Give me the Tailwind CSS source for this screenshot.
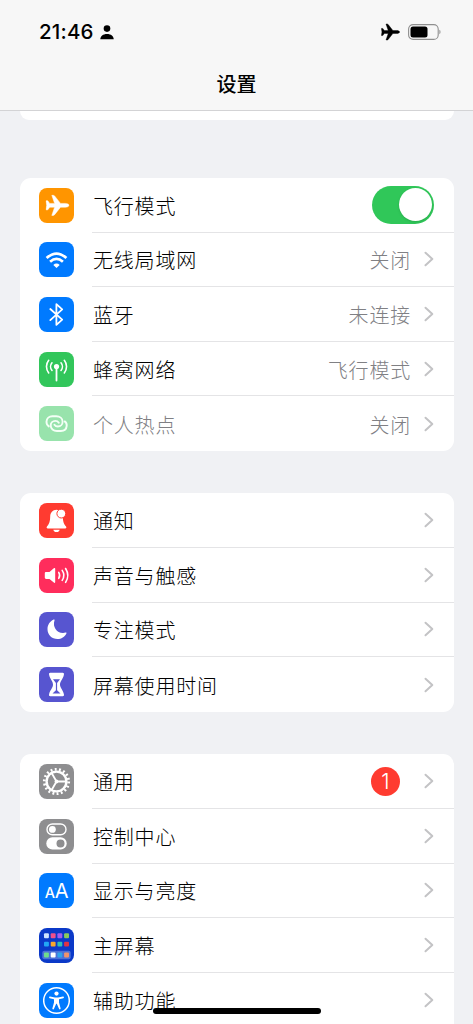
<!DOCTYPE html>
<html lang="zh-CN">
<head>
<meta charset="utf-8">
<meta name="viewport" content="width=device-width, initial-scale=1">
<title>设置</title>
<script src="https://cdn.jsdelivr.net/npm/@tailwindcss/browser@4"></script>
</head>
<body class="h-[1024px] overflow-hidden bg-[#f0f1f4] font-['Inter','Noto_Sans_CJK_SC',sans-serif] text-black">
<svg class="hidden">
  <symbol id="chev" viewBox="0 0 10 16"><path d="M1.500 1.700 8.300 8l-6.800 6.300" fill="none" stroke="#c3c3c5" stroke-width="2" stroke-linecap="round" stroke-linejoin="round"/></symbol>
  <symbol id="plane" viewBox="6.5 6.5 24 21.6"><path d="M30 17.3c0-1.200-1.800-1.900-3.500-1.900H21.500L15.600 7.900c-.4-.5-.8-.7-1.400-.7h-1.400l2.800 8.200H10.700L8.800 12.800H7L7.700 17.300 7 21.800H8.800L10.700 19.200H15.600L12.800 27.400h1.400c.6 0 1-.2 1.400-.7L21.500 19.200h5c1.700 0 3.500-.7 3.500-1.900z" fill="currentColor" stroke="currentColor" stroke-width=".5" stroke-linejoin="round"/></symbol>
</svg>

<div class="flex h-full flex-col">
  <header class="flex h-[111px] shrink-0 flex-col border-b border-[#d3d3d5] bg-[#f7f7f7]">
    <div class="flex h-16 items-center pl-[39px] pr-8">
      <span class="w-[55px] text-[20.500px] font-medium leading-none tracking-[0.200px]">21:46</span>
      <svg class="ml-[6px] h-[15px] w-[14px]" viewBox="0 0 14 15"><circle cx="7" cy="3.600" r="3.300"/><path d="M.3 14.300C.3 11 3 8.900 7 8.900s6.700 2.100 6.700 5.400z"/></svg>
      <svg class="ml-auto mr-2 h-[18px] w-[19px]"><use href="#plane"/></svg>
      <svg class="h-[17px] w-[33px]" viewBox="0 0 33 17"><rect x=".6" y=".6" width="29.600" height="14.800" rx="4.500" fill="none" stroke="#8f8f8f" stroke-width="1.100"/><rect x="2.500" y="2.500" width="17" height="11" rx="2.500"/><path d="M31.400 5.800c1.500.6 1.500 3.800 0 4.400z" fill="#8f8f8f"/></svg>
    </div>
    <h1 class="pt-[2px] text-center text-[20px] font-medium leading-[39px]">设置</h1>
  </header>

  <main class="flex flex-col px-5 pr-[19px]">
    <div class="h-[9px] shrink-0 rounded-b-[11px] bg-white"></div>

    <section class="mt-[58px] shrink-0 rounded-[11px] bg-white pl-[19px] text-[20px] tracking-[0.800px]">
      <div class="flex h-[54.600px] items-center gap-[18px]">
        <svg class="size-[35px] shrink-0 rounded-lg bg-[#ff9500] text-white" viewBox="0 0 35 35"><use href="#plane" x="6.500" y="6.500" width="24" height="21.600"/></svg>
        <div class="flex h-full flex-1 items-center justify-between border-b border-[#e4e4e6] pr-5"><span class="pt-1 pl-px font-light">飞行模式</span><span class="flex h-[38px] w-[62px] items-center justify-end rounded-full bg-[#30c759] pr-[2px]"><span class="size-[33px] rounded-full bg-white shadow"></span></span></div>
      </div>
      <div class="flex h-[54.600px] items-center gap-[18px]">
        <svg class="size-[35px] shrink-0 rounded-lg bg-[#007aff]" viewBox="0 0 35 35" fill="none" stroke="#fff" stroke-width="2.700"><path d="M7.600 16.100Q17.500 7.100 27.400 16.100M11.100 19.800Q17.500 14.100 23.900 19.800"/><path d="M14.300 22.900Q17.500 20.300 20.700 22.900L17.500 26z" fill="#fff" stroke="none"/></svg>
        <div class="flex h-full flex-1 items-center border-b border-[#e4e4e6] pr-5"><span class="pt-1 pl-px font-light">无线局域网</span><span class="ml-auto pt-1 font-light text-[#808084]">关闭</span><svg class="ml-[13px] h-4 w-[10px]"><use href="#chev"/></svg></div>
      </div>
      <div class="flex h-[54.600px] items-center gap-[18px]">
        <svg class="size-[35px] shrink-0 rounded-lg bg-[#007aff]" viewBox="0 0 35 35" fill="none" stroke="#fff" stroke-width="1.800" stroke-linejoin="round" stroke-linecap="round"><path d="M11.300 12 23.200 22.700 17.400 27.900V7.200L23.200 12.400 11.300 23.100"/></svg>
        <div class="flex h-full flex-1 items-center border-b border-[#e4e4e6] pr-5"><span class="pt-1 pl-px font-light">蓝牙</span><span class="ml-auto pt-1 font-light text-[#808084]">未连接</span><svg class="ml-[13px] h-4 w-[10px]"><use href="#chev"/></svg></div>
      </div>
      <div class="flex h-[54.600px] items-center gap-[18px]">
        <svg class="size-[35px] shrink-0 rounded-lg bg-[#32c65b]" viewBox="0 0 35 35" fill="none" stroke="#fff" stroke-width="1.600" stroke-linecap="round"><circle cx="17.500" cy="14.600" r="2.600" fill="#fff" stroke="none"/><path d="M17.500 15V28.600" stroke-width="1.800"/><path d="M13 10.800a5.800 5.800 0 0 0 0 7.600M22 10.800a5.800 5.800 0 0 1 0 7.600M9.700 8.300a10 10 0 0 0 0 12.600M25.300 8.300a10 10 0 0 1 0 12.600"/></svg>
        <div class="flex h-full flex-1 items-center border-b border-[#e4e4e6] pr-5"><span class="pt-1 pl-px font-light">蜂窝网络</span><span class="ml-auto pt-1 font-light text-[#808084]">飞行模式</span><svg class="ml-[13px] h-4 w-[10px]"><use href="#chev"/></svg></div>
      </div>
      <div class="flex h-[54.600px] items-center gap-[18px]">
        <svg class="size-[35px] shrink-0 rounded-lg bg-[#98e3ac]" viewBox="0 0 35 35" fill="none" stroke="#f4fff6" stroke-width="1.900" stroke-linecap="round"><path d="M9.800 20.400C8.200 19.300 7.400 17.600 7.500 15.600 7.700 12.300 10.200 10.300 13.300 10.300H17.300C20.700 10.300 23.600 12.400 23.600 15.700 23.600 18.500 21.500 20.500 18.900 20.500 17.300 20.500 16.200 19.900 15.400 18.700"/><path d="M25.700 15.400C27.200 16.400 27.900 18 27.700 19.900 27.400 23 25 25 21.900 25H17.900C14.500 25 11.700 22.900 11.700 19.600 11.700 16.800 13.800 14.900 16.300 14.900 17.900 14.900 19 15.500 19.800 16.700"/></svg>
        <div class="flex h-full flex-1 items-center pr-5"><span class="pt-1 pl-px font-light text-[#808084]">个人热点</span><span class="ml-auto pt-1 font-light text-[#808084]">关闭</span><svg class="ml-[13px] h-4 w-[10px]"><use href="#chev"/></svg></div>
      </div>
    </section>

    <section class="mt-[42.500px] shrink-0 rounded-[11px] bg-white pl-[19px] text-[20px] tracking-[0.800px]">
      <div class="flex h-[54.600px] items-center gap-[18px]">
        <svg class="size-[35px] shrink-0 rounded-lg bg-[#ff3b30]" viewBox="0 0 35 35" fill="#fff"><path d="M17.500 6.800C13.600 6.800 11.400 9.800 11.200 13.500 11 19 10.200 20.800 8.100 23.300 7.100 24.600 7.700 25.400 8.800 25.400H26.200C27.300 25.400 27.900 24.600 26.900 23.300 24.800 20.800 24 19 23.800 13.500 23.600 9.800 21.400 6.800 17.500 6.800zM14.300 26.700h6.400c-.4 1.500-1.500 2.300-3.200 2.300s-2.800-.8-3.200-2.300z"/><circle cx="22.300" cy="10.600" r="4.400" stroke="#ff3b30" stroke-width="1"/></svg>
        <div class="flex h-full flex-1 items-center justify-between border-b border-[#e4e4e6] pr-5"><span class="pt-1 pl-px font-light">通知</span><svg class="h-4 w-[10px]"><use href="#chev"/></svg></div>
      </div>
      <div class="flex h-[54.600px] items-center gap-[18px]">
        <svg class="size-[35px] shrink-0 rounded-lg bg-[#ff2d5c]" viewBox="0 0 35 35" fill="none" stroke="#fff" stroke-width="1.600" stroke-linecap="round"><path d="M7.200 13.900H10.500L14.800 10.200C15.600 9.600 16.200 9.900 16.200 10.800V24C16.200 24.900 15.600 25.200 14.800 24.600L10.500 20.900H7.200C6.300 20.900 5.800 20.400 5.800 19.500V15.300C5.800 14.400 6.300 13.900 7.200 13.900z" fill="#fff" stroke="none"/><path d="M19.700 14.400a5.500 5.500 0 0 1 0 6M23.200 12.400a9 9 0 0 1 0 10M26.600 10.500a13 13 0 0 1 0 13.900"/></svg>
        <div class="flex h-full flex-1 items-center justify-between border-b border-[#e4e4e6] pr-5"><span class="pt-1 pl-px font-light">声音与触感</span><svg class="h-4 w-[10px]"><use href="#chev"/></svg></div>
      </div>
      <div class="flex h-[54.600px] items-center gap-[18px]">
        <svg class="size-[35px] shrink-0 rounded-lg bg-[#5755d0]" viewBox="0 0 35 35" fill="#fff"><path d="M14.600 7.600C15.300 7.300 15.800 7.800 15.500 8.500 13.300 14.500 17.600 21 24 21 25 21 25.800 20.800 26.500 20.500 27.300 20.200 27.700 20.700 27.400 21.400 25.800 24.900 22.400 27 18.500 27 12.900 27 8.500 22.700 8.500 17.200 8.500 13 10.900 9.300 14.600 7.600z"/></svg>
        <div class="flex h-full flex-1 items-center justify-between border-b border-[#e4e4e6] pr-5"><span class="pt-1 pl-px font-light">专注模式</span><svg class="h-4 w-[10px]"><use href="#chev"/></svg></div>
      </div>
      <div class="flex h-[54.600px] items-center gap-[18px]">
        <svg class="size-[35px] shrink-0 rounded-lg bg-[#5755d0]" viewBox="0 0 35 35"><path d="M11.300 5.800H23.700C24.800 5.800 25.200 6.700 24.900 7.800 24.200 12 21 14.200 21 17.500S24.200 23.200 24.900 27.300C25.200 28.500 24.800 29.300 23.700 29.300H11.300C10.200 29.300 9.800 28.500 10.100 27.300 10.800 23.200 14 20.900 14 17.500S10.800 12 10.100 7.800C9.800 6.700 10.200 5.800 11.300 5.800z" fill="#fff"/><path d="M14 12.200h7L18.100 16v7.300L21.500 26.500H13.500L16.900 23.300V16z" fill="#5755d0"/></svg>
        <div class="flex h-full flex-1 items-center justify-between pr-5"><span class="pt-1 pl-px font-light">屏幕使用时间</span><svg class="h-4 w-[10px]"><use href="#chev"/></svg></div>
      </div>
    </section>

    <section class="mt-[42.500px] shrink-0 rounded-t-[11px] bg-white pl-[19px] text-[20px] tracking-[0.800px]">
      <div class="flex h-[54.600px] items-center gap-[18px]">
        <svg class="size-[35px] shrink-0 rounded-lg bg-[#8e8e90]" viewBox="0 0 35 35" fill="none" stroke="#fff"><circle cx="17.500" cy="17.500" r="12.200" stroke-width="2.800" stroke-dasharray="1.900 2.359"/><circle cx="17.500" cy="17.500" r="9.900" stroke-width="2.400"/><circle cx="17.500" cy="17.500" r="1.900" fill="#fff" stroke="none"/><path d="M17.500 17.500H27.500M17.500 17.500 12.500 8.800M17.500 17.500 12.500 26.200" stroke-width="1.800"/></svg>
        <div class="flex h-full flex-1 items-center border-b border-[#e4e4e6] pr-5"><span class="pt-1 pl-px font-light">通用</span><span class="ml-auto flex size-[29px] items-center justify-center rounded-full bg-[#ff3b30] font-['Inter'] text-[21px] font-light leading-none tracking-normal text-white">1</span><svg class="ml-[24px] h-4 w-[10px]"><use href="#chev"/></svg></div>
      </div>
      <div class="flex h-[54.600px] items-center gap-[18px]">
        <svg class="size-[35px] shrink-0 rounded-lg bg-[#8e8e90]" viewBox="0 0 35 35"><rect x="8" y="5" width="19" height="10.800" rx="5.400" fill="none" stroke="#fff" stroke-width="1.400"/><circle cx="13.400" cy="10.400" r="3.400" fill="#fff"/><rect x="7.300" y="18.300" width="20.400" height="12.200" rx="6.100" fill="#fff"/><circle cx="21.500" cy="24.400" r="4" fill="#8e8e90"/></svg>
        <div class="flex h-full flex-1 items-center justify-between border-b border-[#e4e4e6] pr-5"><span class="pt-1 pl-px font-light">控制中心</span><svg class="h-4 w-[10px]"><use href="#chev"/></svg></div>
      </div>
      <div class="flex h-[54.600px] items-center gap-[18px]">
        <div class="flex size-[35px] shrink-0 items-baseline justify-center rounded-lg bg-[#007aff] font-['Inter'] leading-[36px] tracking-[-0.300px] text-white"><span class="text-[14.500px] font-medium">A</span><span class="text-[20px]">A</span></div>
        <div class="flex h-full flex-1 items-center justify-between border-b border-[#e4e4e6] pr-5"><span class="pt-1 pl-px font-light">显示与亮度</span><svg class="h-4 w-[10px]"><use href="#chev"/></svg></div>
      </div>
      <div class="flex h-[54.600px] items-center gap-[18px]">
        <svg class="size-[35px] shrink-0 rounded-lg bg-[#0b39c8]" viewBox="0 0 35 35"><rect x="3.300" y="22.800" width="28.400" height="8.400" rx="2" fill="#4b70d8"/><g><rect x="5" y="5.300" width="4.900" height="4.900" rx="1" fill="#cfe3ff"/><rect x="11.700" y="5.300" width="4.900" height="4.900" rx="1" fill="#f0508c"/><rect x="18.400" y="5.300" width="4.900" height="4.900" rx="1" fill="#a35cf0"/><rect x="25.100" y="5.300" width="4.900" height="4.900" rx="1" fill="#8cc95c"/><rect x="5" y="13.700" width="4.900" height="4.900" rx="1" fill="#22a7f5"/><rect x="11.700" y="13.700" width="4.900" height="4.900" rx="1" fill="#f7a72c"/><rect x="18.400" y="13.700" width="4.900" height="4.900" rx="1" fill="#2fc0b4"/><rect x="25.100" y="13.700" width="4.900" height="4.900" rx="1" fill="#e03345"/><rect x="5" y="24.600" width="4.900" height="4.900" rx="1" fill="#6fdc8c"/><rect x="11.700" y="24.600" width="4.900" height="4.900" rx="1" fill="#fff"/><rect x="18.400" y="24.600" width="4.900" height="4.900" rx="1" fill="#2fa4ea"/><rect x="25.100" y="24.600" width="4.900" height="4.900" rx="1" fill="#f0936c"/></g></svg>
        <div class="flex h-full flex-1 items-center justify-between border-b border-[#e4e4e6] pr-5"><span class="pt-1 pl-px font-light">主屏幕</span><svg class="h-4 w-[10px]"><use href="#chev"/></svg></div>
      </div>
      <div class="flex h-[54.600px] items-center gap-[18px]">
        <svg class="size-[35px] shrink-0 rounded-lg bg-[#007aff]" viewBox="0 0 35 35"><circle cx="17.500" cy="17.500" r="12.800" fill="none" stroke="#fff" stroke-width="1.500"/><circle cx="17.500" cy="10.600" r="2.100" fill="#fff"/><path d="M11 13.600 16 14.400H19L24 13.600C25.200 13.500 25.300 14.900 24.300 15.200L20 16.300V19.500L21.600 25.300C21.900 26.500 20.500 26.900 20 25.800L17.800 20.800H17.200L15 25.800C14.500 26.900 13.100 26.500 13.400 25.300L15 19.500V16.300L10.700 15.200C9.700 14.900 9.800 13.500 11 13.600z" fill="#fff"/></svg>
        <div class="flex h-full flex-1 items-center justify-between pr-5"><span class="pt-1 pl-px font-light">辅助功能</span><svg class="h-4 w-[10px]"><use href="#chev"/></svg></div>
      </div>
    </section>
  </main>
</div>
<div class="fixed left-[153px] top-[1008px] h-[6px] w-[168px] rounded-full bg-black"></div>
</body>
</html>
